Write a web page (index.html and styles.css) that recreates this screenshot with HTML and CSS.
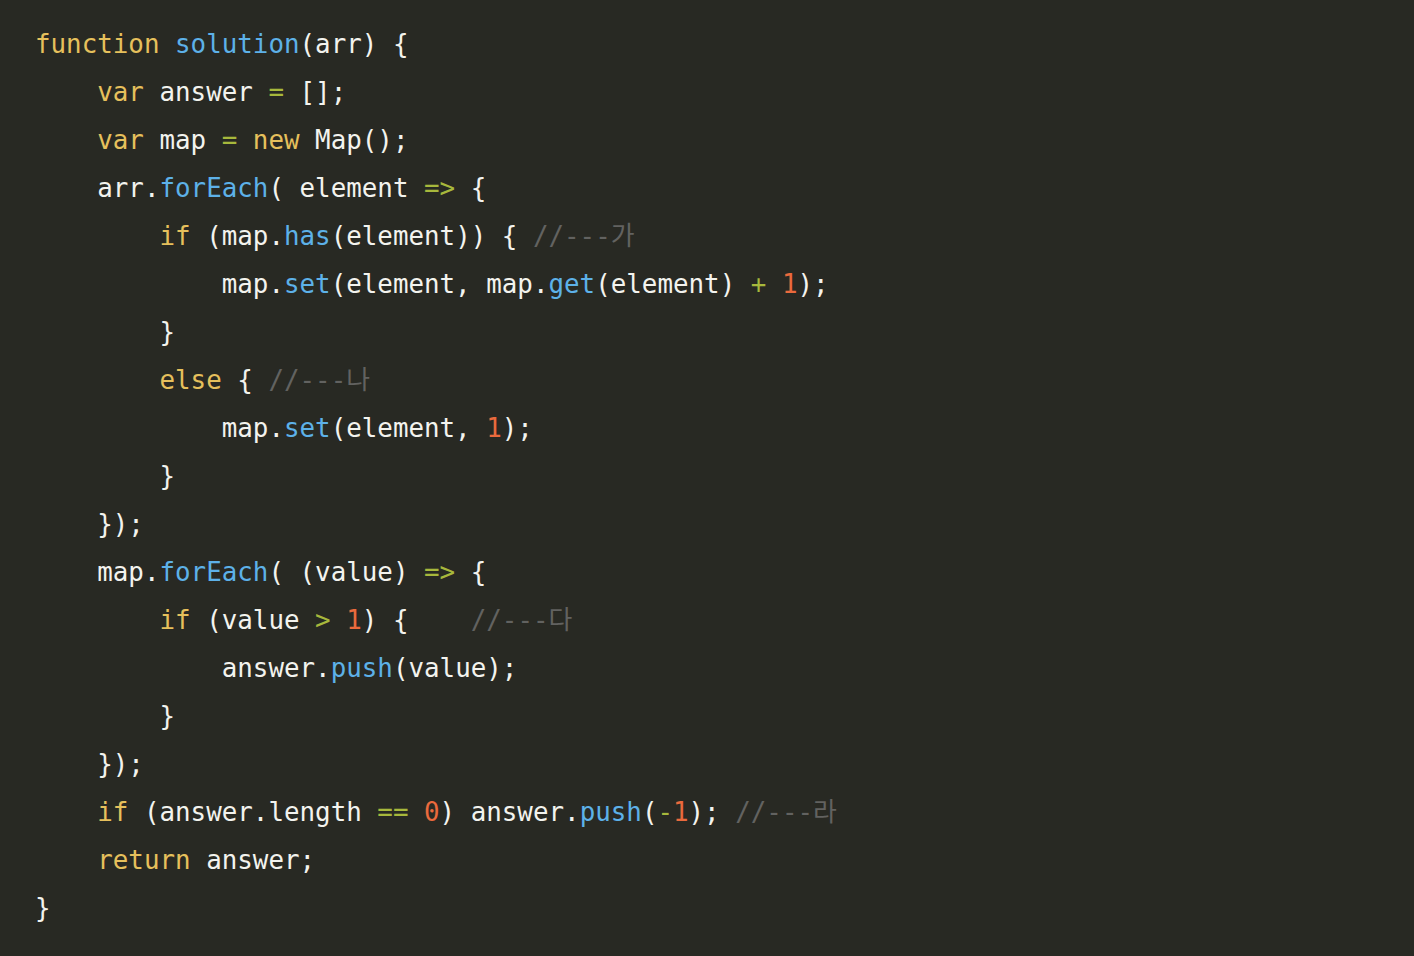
FILE: index.html
```html
<!DOCTYPE html>
<html lang="ko">
<head>
<meta charset="utf-8">
<link rel="stylesheet" href="styles.css">
</head>
<body>
<pre class="code"><span class="kw">function</span> <span class="fn">solution</span>(arr) {
    <span class="kw">var</span> answer <span class="op">=</span> [];
    <span class="kw">var</span> map <span class="op">=</span> <span class="kw">new</span> Map();
    arr.<span class="fn">forEach</span>( element <span class="op">=&gt;</span> {
        <span class="kw">if</span> (map.<span class="fn">has</span>(element)) { <span class="cm">//---가</span>
            map.<span class="fn">set</span>(element, map.<span class="fn">get</span>(element) <span class="op">+</span> <span class="num">1</span>);
        }
        <span class="kw">else</span> { <span class="cm">//---나</span>
            map.<span class="fn">set</span>(element, <span class="num">1</span>);
        }
    });
    map.<span class="fn">forEach</span>( (value) <span class="op">=&gt;</span> {
        <span class="kw">if</span> (value <span class="op">&gt;</span> <span class="num">1</span>) {    <span class="cm">//---다</span>
            answer.<span class="fn">push</span>(value);
        }
    });
    <span class="kw">if</span> (answer.length <span class="op">==</span> <span class="num">0</span>) answer.<span class="fn">push</span>(<span class="op">-</span><span class="num">1</span>); <span class="cm">//---라</span>
    <span class="kw">return</span> answer;
}</pre>
</body>
</html>
```

FILE: styles.css
```css
html, body {
  margin: 0;
  padding: 0;
  background: #282923;
  height: 100%;
}
.code {
  margin: 0;
  padding: 20px 0 0 35px;
  font-family: "DejaVu Sans Mono", "Noto Sans CJK KR", monospace;
  font-size: 25.85px;
  line-height: 48px;
  color: #f3f3ee;
  white-space: pre;
}
.kw { color: #e6c05c; }
.fn { color: #5db1e8; }
.op { color: #a7b83c; }
.num { color: #ea6a3d; }
.cm { color: #626260; }
```
